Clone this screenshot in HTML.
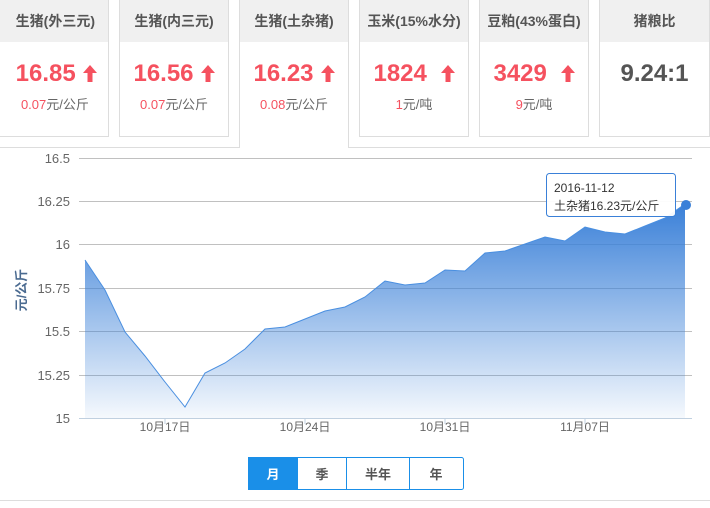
<!DOCTYPE html>
<html><head><meta charset="utf-8"><style>
*{margin:0;padding:0;box-sizing:border-box}
body{width:710px;height:508px;background:#fff;font-family:"Liberation Sans","Noto Sans CJK SC",sans-serif;position:relative;overflow:hidden}
.card{position:absolute;top:-2px;height:139px;border:1px solid #ddd;background:#fff;text-align:center}
.card .h{height:43px;background:#f0f0f0;color:#555;font-weight:bold;font-size:14px;line-height:45px}
.card .v{font-size:24px;font-weight:bold;color:#f5515f;margin-top:17px;line-height:30px}
.card .v svg{vertical-align:-1px;margin-left:7px}
.card .s{font-size:13px;color:#666;margin-top:5px}
.card .s b{font-weight:normal;color:#f5515f}
.act{height:150px;border-bottom:none}
</style></head><body>
<div class="card" style="left:-10px;width:119px"><div class="h">&nbsp;&nbsp;&nbsp;生猪(外三元)</div><div class="v">&nbsp;&nbsp;16.85<svg width="14" height="17" viewBox="0 0 14 17"><path d="M7 0L14 8H9.5V17H4.5V8H0Z" fill="#f5515f"/></svg></div><div class="s">&nbsp;&nbsp;&nbsp;<b>0.07</b>元/公斤</div></div>
<div class="card" style="left:119px;width:110px"><div class="h">生猪(内三元)</div><div class="v">16.56<svg width="14" height="17" viewBox="0 0 14 17"><path d="M7 0L14 8H9.5V17H4.5V8H0Z" fill="#f5515f"/></svg></div><div class="s"><b>0.07</b>元/公斤</div></div>
<div class="card act" style="left:239px;width:110px"><div class="h">生猪(土杂猪)</div><div class="v">16.23<svg width="14" height="17" viewBox="0 0 14 17"><path d="M7 0L14 8H9.5V17H4.5V8H0Z" fill="#f5515f"/></svg></div><div class="s"><b>0.08</b>元/公斤</div></div>
<div class="card" style="left:359px;width:110px"><div class="h">玉米(15%水分)</div><div class="v">1824 <svg width="14" height="17" viewBox="0 0 14 17"><path d="M7 0L14 8H9.5V17H4.5V8H0Z" fill="#f5515f"/></svg></div><div class="s"><b>1</b>元/吨</div></div>
<div class="card" style="left:479px;width:110px"><div class="h">豆粕(43%蛋白)</div><div class="v">3429 <svg width="14" height="17" viewBox="0 0 14 17"><path d="M7 0L14 8H9.5V17H4.5V8H0Z" fill="#f5515f"/></svg></div><div class="s"><b>9</b>元/吨</div></div>
<div class="card" style="left:599px;width:111px"><div class="h">猪粮比</div><div class="v" style="color:#555">9.24:1</div></div>
<div style="position:absolute;left:0;top:147px;width:240px;height:1px;background:#ddd"></div>
<div style="position:absolute;left:348px;top:147px;width:362px;height:1px;background:#ddd"></div>
<svg width="710" height="508" style="position:absolute;left:0;top:0" font-family="Liberation Sans, Noto Sans CJK SC, sans-serif">
<defs><linearGradient id="g" x1="0" y1="0" x2="0" y2="1"><stop offset="0" stop-color="#3a80d8"/><stop offset="1" stop-color="#3a80d8" stop-opacity="0.05"/></linearGradient></defs>
<g stroke="#c0c0c0" stroke-width="1">
<line x1="79" y1="158.5" x2="692" y2="158.5"/><line x1="79" y1="201.5" x2="692" y2="201.5"/><line x1="79" y1="244.5" x2="692" y2="244.5"/><line x1="79" y1="288.5" x2="692" y2="288.5"/><line x1="79" y1="331.5" x2="692" y2="331.5"/><line x1="79" y1="375.5" x2="692" y2="375.5"/></g>
<line x1="79" y1="418.5" x2="692" y2="418.5" stroke="#c0d0e0"/>
<g stroke="#c0d0e0"><line x1="165" y1="418" x2="165" y2="424"/><line x1="305" y1="418" x2="305" y2="424"/><line x1="445" y1="418" x2="445" y2="424"/><line x1="585" y1="418" x2="585" y2="424"/></g>
<polygon fill="url(#g)" points="85,418 85,260 105,290 125,332 145,356 165,382 185,407 205,373 225,363 245,349 265,329 285,327 305,319 325,311 345,307 365,297 385,281 405,285 425,283 445,270 465,271 485,253 505,251 525,244 545,237 565,241 585,227 605,232 625,234 645,226 665,218 685,204 685,418"/>
<polyline fill="none" stroke="#4a8fe0" stroke-width="1" points="85,260 105,290 125,332 145,356 165,382 185,407 205,373 225,363 245,349 265,329 285,327 305,319 325,311 345,307 365,297 385,281 405,285 425,283 445,270 465,271 485,253 505,251 525,244 545,237 565,241 585,227 605,232 625,234 645,226 665,218 685,204"/>
<circle cx="686" cy="205" r="5" fill="#3a80d8"/>
<g fill="#666" font-size="13" text-anchor="end"><text x="70" y="163">16.5</text><text x="70" y="206">16.25</text><text x="70" y="249">16</text><text x="70" y="293">15.75</text><text x="70" y="336">15.5</text><text x="70" y="380">15.25</text><text x="70" y="423">15</text></g>
<g fill="#666" font-size="12" text-anchor="middle"><text x="165" y="431">10月17日</text><text x="305" y="431">10月24日</text><text x="445" y="431">10月31日</text><text x="585" y="431">11月07日</text></g>
<text transform="translate(26,290) rotate(-90)" fill="#4a6a90" font-size="13" font-weight="bold" text-anchor="middle">元/公斤</text>
<rect x="546.5" y="173.5" width="129" height="43" rx="3" fill="#fff" fill-opacity="0.95" stroke="#3a80d8"/>
<text x="554" y="192" font-size="12" fill="#333">2016-11-12</text>
<text x="554" y="210" font-size="12" fill="#333">土杂猪16.23元/公斤</text>
<rect x="248.5" y="457.5" width="215" height="32" rx="2" fill="#fff" stroke="#1a8fe8"/>
<rect x="248" y="457" width="50" height="33" fill="#1a8fe8"/>
<line x1="346.5" y1="457" x2="346.5" y2="490" stroke="#1a8fe8"/><line x1="409.5" y1="457" x2="409.5" y2="490" stroke="#1a8fe8"/>
<g font-size="13" font-weight="bold" text-anchor="middle" fill="#555"><text x="273" y="479" fill="#fff">月</text><text x="322" y="479">季</text><text x="378" y="479">半年</text><text x="436" y="479">年</text></g>
<line x1="0" y1="500.5" x2="710" y2="500.5" stroke="#ddd"/>
</svg>
</body></html>
